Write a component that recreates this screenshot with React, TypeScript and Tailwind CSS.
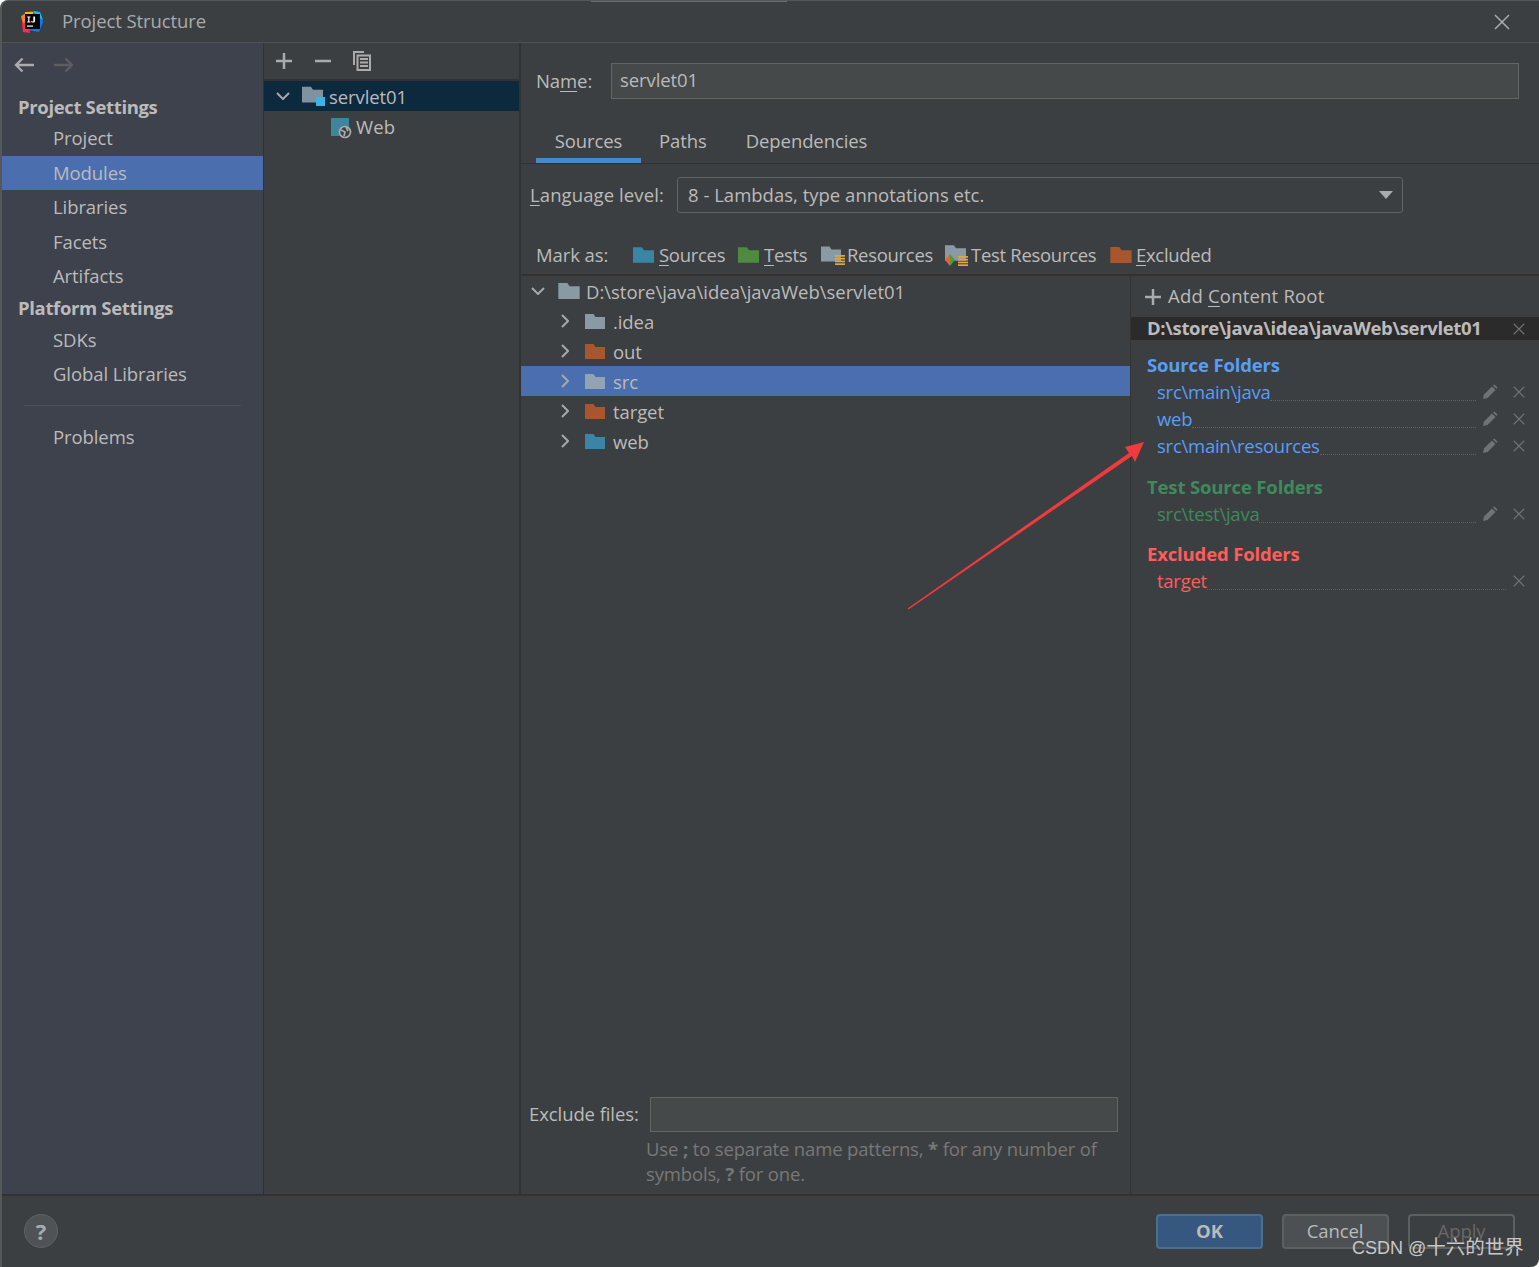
import React from "react";

function Folder({ color, className = "" }: { color: string; className?: string }) {
  return (
    <svg viewBox="0 0 20 15" className={className} fill={color}>
      <path d="M0 0H8.5L10.5 3H20V15H0Z" />
    </svg>
  );
}

function Stack({ className = "" }: { className?: string }) {
  return (
    <svg viewBox="0 0 10 10" className={className} fill="#e0a83c">
      <rect x="0" y="0" width="10" height="1.7" />
      <rect x="0" y="2.8" width="10" height="1.7" />
      <rect x="0" y="5.6" width="10" height="1.7" />
      <rect x="0" y="8.3" width="10" height="1.7" />
    </svg>
  );
}

function Pencil() {
  return (
    <svg viewBox="0 0 16 16" className="w-4 h-4 shrink-0 -mt-[2px]" fill="#6e7375">
      <path d="M1 15L2 10.5L10 2.5L13.5 6L5.5 14Z" />
      <path d="M11 1.5L12.5 0.5L15.5 3.5L14.5 5Z" />
    </svg>
  );
}

function Cross({ className = "" }: { className?: string }) {
  return (
    <svg viewBox="0 0 16 16" className={`shrink-0 ${className}`} fill="none" stroke="currentColor" strokeWidth="1.500">
      <path d="M1 1L15 15M15 1L1 15" />
    </svg>
  );
}

function PlusIcon({ className = "" }: { className?: string }) {
  return (
    <svg viewBox="0 0 16 16" className={`shrink-0 ${className}`} fill="none" stroke="#a9abad" strokeWidth="2.500">
      <path d="M8 0V16M0 8H16" />
    </svg>
  );
}

function Down({ className = "" }: { className?: string }) {
  return (
    <svg viewBox="0 0 14 8" className={`w-[14px] h-[8px] shrink-0 ${className}`} fill="none" stroke="#a6a8aa" strokeWidth="2">
      <path d="M1 1L7 7L13 1" />
    </svg>
  );
}

function Right({ className = "" }: { className?: string }) {
  return (
    <svg viewBox="0 0 8 14" className={`w-[8px] h-[14px] shrink-0 ${className}`} fill="none" stroke="#a6a8aa" strokeWidth="2">
      <path d="M1 1L7 7L1 13" />
    </svg>
  );
}

function Logo() {
  return (
    <svg viewBox="0 0 24 24" className="w-6 h-6 shrink-0">
      <path d="M3 4L11 1L8 9Z" fill="#fe2857" />
      <path d="M10 1L20 2L23 12L19 22L9 20Z" fill="#087cfa" />
      <path d="M13 1L20 2L23 10L17 6Z" fill="#07c3f2" />
      <path d="M1 6L7 3L8 13L3 14Z" fill="#fe7f2d" />
      <path d="M2 13L9 12L10 23L3 22Z" fill="#fe2857" />
      <path d="M5 2H13V7H5Z" fill="#fdb60d" />
      <rect x="5" y="4" width="15" height="15" fill="#000" />
      <rect x="7" y="15.5" width="6" height="1.2" fill="#fff" />
      <path d="M7.2 6.500h3.200v1h-1v4h1v1H7.200v-1h1v-4h-1z M11.500 6.500h3.600v5l-1 1h-2.400l-.6-1 .8-.7.5.6h.9v-4.900h-1.800z" fill="#fff" />
    </svg>
  );
}

function SideItem({ label, active }: { label: string; active?: boolean }) {
  return (
    <div className={`h-[34.5px] pl-[51px] pt-[0.5px] flex items-center ${active ? "bg-[#4b6eaf]" : ""}`}>{label}</div>
  );
}

function SideHead({ label, h }: { label: string; h: string }) {
  return <div className={`${h} pl-4 flex items-center font-bold tracking-[-0.35px] text-[#bbbbbb]`}>{label}</div>;
}

function TreeRow({ label, color, active }: { label: string; color: string; active?: boolean }) {
  return (
    <div className={`h-[30px] flex items-center pl-[40px] ${active ? "bg-[#4b6eaf]" : ""}`}>
      <Right />
      <Folder color={color} className="w-5 h-[15px] ml-[16px] mr-2 shrink-0" />
      <span className="pt-[2px]">{label}</span>
    </div>
  );
}

function MarkItem({ icon, children, cls }: { icon: React.ReactNode; children: React.ReactNode; cls: string }) {
  return (
    <div className={`flex items-center tracking-[-0.3px] ${cls}`}>
      {icon}
      <span>{children}</span>
    </div>
  );
}

function RootRow({ label, color, pencil }: { label: string; color: string; pencil?: boolean }) {
  return (
    <div className="h-[27px] flex items-center pl-[26px] pr-[14px] tracking-[-0.25px]" style={{ color }}>
      <span>{label}</span>
      <span className="flex-1 self-end mb-[5px] border-b border-dotted border-[#5f6264]" />
      {pencil ? <span className="w-[6px]" /> : null}
      {pencil ? <Pencil /> : null}
      <Cross className={`w-[12px] h-[12px] -mt-[2px] text-[#6e7375] ${pencil ? "ml-[15px]" : "ml-[7px]"}`} />
    </div>
  );
}

function Section({ title, color, h }: { title: string; color: string; h: string }) {
  return (
    <div className={`${h} flex items-center pl-4 font-bold tracking-[-0.15px]`} style={{ color }}>
      {title}
    </div>
  );
}

export default function App() {
  return (
    <div
      className="relative w-[1539px] h-[1267px] overflow-hidden bg-[#3c3f41] text-[#bbbbbb] text-[18.500px] leading-none border-l-2 border-t border-[#55585a] rounded-tl-[8px] rounded-br-[8px] flex flex-col tracking-[-0.09px]"
      style={{ fontFamily: '"Open Sans", "Noto Sans", "Liberation Sans", sans-serif' }}
    >
      <div className="h-[42px] shrink-0 flex items-center border-b border-[#515151] pl-[18px] pr-[29px]">
        <Logo />
        <span className="ml-[18px] text-[#a9abad]">Project Structure</span>
        <Cross className="ml-auto w-[16px] h-[16px] text-[#a9abad]" />
      </div>

      <div className="h-[1153px] shrink-0 flex border-b-2 border-[#323232]">
        <aside className="w-[261px] shrink-0 bg-[#3e424c] border-r border-[#323232] box-content">
          <div className="h-[44px] flex items-center pl-[12px] pb-[1px] gap-[20px]">
            <svg viewBox="0 0 20 16" className="w-5 h-4" fill="none" stroke="#a9abad" strokeWidth="2.300">
              <path d="M20 8H2M8.500 1.500L2 8L8.500 14.500" />
            </svg>
            <svg viewBox="0 0 20 16" className="w-5 h-4" fill="none" stroke="#5b5e60" strokeWidth="2.300">
              <path d="M0 8H18M11.500 1.500L18 8L11.500 14.500" />
            </svg>
          </div>
          <SideHead label="Project Settings" h="h-[34px] pt-[6px]" />
          <SideItem label="Project" />
          <SideItem label="Modules" active />
          <SideItem label="Libraries" />
          <SideItem label="Facets" />
          <SideItem label="Artifacts" />
          <SideHead label="Platform Settings" h="h-[29px]" />
          <SideItem label="SDKs" />
          <SideItem label="Global Libraries" />
          <div className="h-[28px] flex items-center px-[22px]">
            <div className="h-px w-full bg-[#4c5058]" />
          </div>
          <SideItem label="Problems" />
        </aside>

        <section className="w-[255px] shrink-0 border-r-2 border-[#323232] box-content">
          <div className="h-[36px] border-b-2 border-[#323232] flex items-center pl-[12px] box-content">
            <PlusIcon className="w-4 h-4" />
            <svg viewBox="0 0 16 16" className="w-4 h-4 ml-[23px]" fill="none" stroke="#a9abad" strokeWidth="2.500">
              <path d="M0 8H16" />
            </svg>
            <svg viewBox="0 0 20 20" className="w-5 h-5 ml-[21px]" fill="none" stroke="#a9abad" strokeWidth="2">
              <path d="M12 1H2V14" />
              <path d="M5.500 4.500H18V19H5.500Z" fill="#3c3f41" />
              <path d="M8 8H16M8 11.500H16M8 15H16" />
            </svg>
          </div>
          <div className="h-[30px] bg-[#0d293e] flex items-center pl-[12px]">
            <Down />
            <span className="relative ml-[12px] mr-1 w-[23px] h-[20px] shrink-0">
              <Folder color="#7f929f" className="w-[21px] h-[17px]" />
              <span className="absolute right-0 bottom-0 w-[9px] h-[9px] bg-[#3db3e4]" />
            </span>
            <span className="pt-[2px]">servlet01</span>
          </div>
          <div className="h-[30px] flex items-center pl-[67px] mt-px">
            <span className="relative w-[18px] h-[18px] mr-[7px] bg-[#3e86a0] shrink-0">
              <svg viewBox="0 0 14 14" className="absolute -right-[3px] -bottom-[3px] w-[14px] h-[14px]" fill="#3c3f41" stroke="#a9abad" strokeWidth="1.700">
                <circle cx="7" cy="7" r="5.500" />
                <path d="M3 5L7 7L6 11M8 2L10 6" fill="none" />
              </svg>
            </span>
            <span className="tracking-[0.1px]">Web</span>
          </div>
        </section>

        <section className="flex-1 flex flex-col min-w-0">
          <div className="h-[121px] shrink-0 border-b border-[#323232] flex flex-col">
            <div className="h-[71px] shrink-0 flex items-center pl-[15px] pr-[20px] pt-[5px]">
              <span className="w-[75px]">Na<u className="underline-offset-[3px]">m</u>e:</span>
              <div className="flex-1 h-[36px] bg-[#45494a] border border-[#646464] flex items-center pl-2 pb-[2px]">servlet01</div>
            </div>
            <div className="flex-1 flex pl-[15px]">
              <div className="w-[105px] border-b-[5px] border-[#4a88c7] flex items-center justify-center pt-[11px]">Sources</div>
              <div className="ml-[18px] flex items-center pt-[6px]">Paths</div>
              <div className="ml-[39px] flex items-center pt-[6px]">Dependencies</div>
            </div>
          </div>

          <div className="h-[52px] shrink-0 flex items-center pl-[9px] pt-[10px]">
            <span className="w-[147px] tracking-[0.1px]"><u className="underline-offset-[3px]">L</u>anguage level:</span>
            <div className="w-[726px] h-[36px] rounded-[3px] border border-[#646464] flex items-center pl-[10px] pr-[9px]">
              <span className="tracking-[0.010px] pt-[1px]">8 - Lambdas, type annotations etc.</span>
              <span className="ml-auto w-0 h-0 border-x-[7px] border-x-transparent border-t-[8px] border-t-[#a9abad]" />
            </div>
          </div>

          <div className="h-[60px] shrink-0 flex items-center pl-[15px] pt-[20px] border-b-2 border-[#323232]">
            <span className="w-[97px]">Mark as:</span>
            <MarkItem icon={<Folder color="#3a85a6" className="w-[21px] h-4 mr-[5px] shrink-0" />} cls="w-[105px]"><u className="underline-offset-[3px]">S</u>ources</MarkItem>
            <MarkItem icon={<Folder color="#4f8a3f" className="w-[21px] h-4 mr-[5px] shrink-0" />} cls="w-[83px]"><u className="underline-offset-[3px]">T</u>ests</MarkItem>
            <MarkItem
              icon={
                <span className="relative w-[24px] h-[19px] mr-[2px] shrink-0">
                  <Folder color="#8a9aa5" className="w-[20px] h-4" />
                  <Stack className="absolute right-0 bottom-0 w-[10px] h-[10px]" />
                </span>
              }
              cls="w-[124px]"
            >
              Resources
            </MarkItem>
            <MarkItem
              icon={
                <span className="relative w-[23px] h-[21px] mr-[3px] shrink-0">
                  <Folder color="#8a9aa5" className="w-[21px] h-4" />
                  <Stack className="absolute right-0 bottom-0 w-[10px] h-[10px]" />
                  <svg viewBox="0 0 10 12" className="absolute left-0 bottom-0 w-[10px] h-[12px]">
                    <path d="M5 0L0 6L5 12Z" fill="#e8622a" />
                    <path d="M5 0L10 6L5 12Z" fill="#4f9a3f" />
                  </svg>
                </span>
              }
              cls="w-[165px]"
            >
              Test Resources
            </MarkItem>
            <MarkItem icon={<Folder color="#a9562e" className="w-[22px] h-4 mr-[4px] shrink-0" />} cls=""><u className="underline-offset-[3px]">E</u>xcluded</MarkItem>
          </div>

          <div className="flex-1 flex min-h-0">
            <div className="w-[609px] shrink-0 flex flex-col border-r border-[#323232] box-content">
              <div className="h-[30px] flex items-center pl-[10px]">
                <Down />
                <Folder color="#8a9aa5" className="w-[22px] h-4 ml-[13px] mr-[6px] shrink-0" />
                <span className="tracking-[-0.02px] pt-[2px]">D:\store\java\idea\javaWeb\servlet01</span>
              </div>
              <TreeRow label=".idea" color="#8a9aa5" />
              <TreeRow label="out" color="#a9562e" />
              <TreeRow label="src" color="#93a3b6" active />
              <TreeRow label="target" color="#a9562e" />
              <TreeRow label="web" color="#3a85a6" />
              <div className="flex-1" />
              <div className="flex items-center pl-[8px] pr-[12px]">
                <span className="w-[121px]">Exclude files:</span>
                <div className="flex-1 h-[35px] bg-[#45494a] border border-[#646464]" />
              </div>
              <div className="pl-[125px] pt-[4px] pb-[8px] text-[#787878] leading-[25px] tracking-[-0.15px]">
                <div className="flex whitespace-pre">
                  <span>Use </span><b>;</b><span> to separate name patterns, </span><b>*</b><span> for any number of</span>
                </div>
                <div className="flex whitespace-pre">
                  <span>symbols, </span><b>?</b><span> for one.</span>
                </div>
              </div>
            </div>

            <div className="flex-1 min-w-0">
              <div className="h-[41px] flex items-center pl-[14px]">
                <PlusIcon className="w-4 h-4 mr-[7px]" />
                <span className="tracking-[0.2px]">Add <u className="underline-offset-[3px]">C</u>ontent Root</span>
              </div>
              <div className="h-[23px] bg-[#2b2b2b] flex items-center pl-[16px] pr-[14px] font-bold tracking-[-0.35px]">
                <span>D:\store\java\idea\javaWeb\servlet01</span>
                <Cross className="w-[12px] h-[12px] text-[#6e7375] ml-auto" />
              </div>
              <Section title="Source Folders" color="#589df6" h="h-[39px] pt-[11px]" />
              <RootRow label="src\main\java" color="#589df6" pencil />
              <RootRow label="web" color="#589df6" pencil />
              <RootRow label="src\main\resources" color="#589df6" pencil />
              <Section title="Test Source Folders" color="#3e8a5c" h="h-[41px] pt-[14px]" />
              <RootRow label="src\test\java" color="#3e8a5c" pencil />
              <Section title="Excluded Folders" color="#ff5c5c" h="h-[40px] pt-[13px]" />
              <RootRow label="target" color="#ff5c5c" />
            </div>
          </div>
        </section>
      </div>

      <footer className="flex-1 flex items-center pl-[22px] pr-[24px] pb-[1px]">
        <div className="w-[34px] h-[34px] rounded-full bg-[#4f5355] border border-[#5e6264] flex items-center justify-center font-bold text-[#a9abad] text-[22px]">?</div>
        <div className="ml-auto flex gap-[19px]">
          <div className="w-[107px] h-[35px] rounded-[4px] bg-[#365880] border-2 border-[#4c708c] flex items-center justify-center font-bold">OK</div>
          <div className="w-[107px] h-[35px] rounded-[4px] bg-[#4c5052] border-2 border-[#5e6060] flex items-center justify-center pr-[1px]">Cancel</div>
          <div className="w-[107px] h-[35px] rounded-[4px] border-2 border-[#5e6060] flex items-center justify-center text-[#686868]">Apply</div>
        </div>
      </footer>

      <div className="absolute left-[589px] -top-px w-[196px] h-[2px] bg-[#6a6d70]" />

      <svg className="absolute left-[-2px] top-[-1px] pointer-events-none" width="1539" height="1267">
        <path d="M907.500 608.500L1129 453L1125 447L1144 442L1135 462L1132 456L908.500 609.500Z" fill="#f03a3e" />
      </svg>

      <div
        className="absolute left-[1350px] top-[1235px] h-[24px] flex items-center whitespace-pre text-[#c8c8c8]"
        style={{ fontFamily: '"Liberation Sans", "Noto Sans CJK SC", sans-serif', letterSpacing: 0 }}
      >
        <span className="text-[18px]">CSDN @</span>
        <span className="text-[19.500px]">十六的世界</span>
      </div>
    </div>
  );
}
